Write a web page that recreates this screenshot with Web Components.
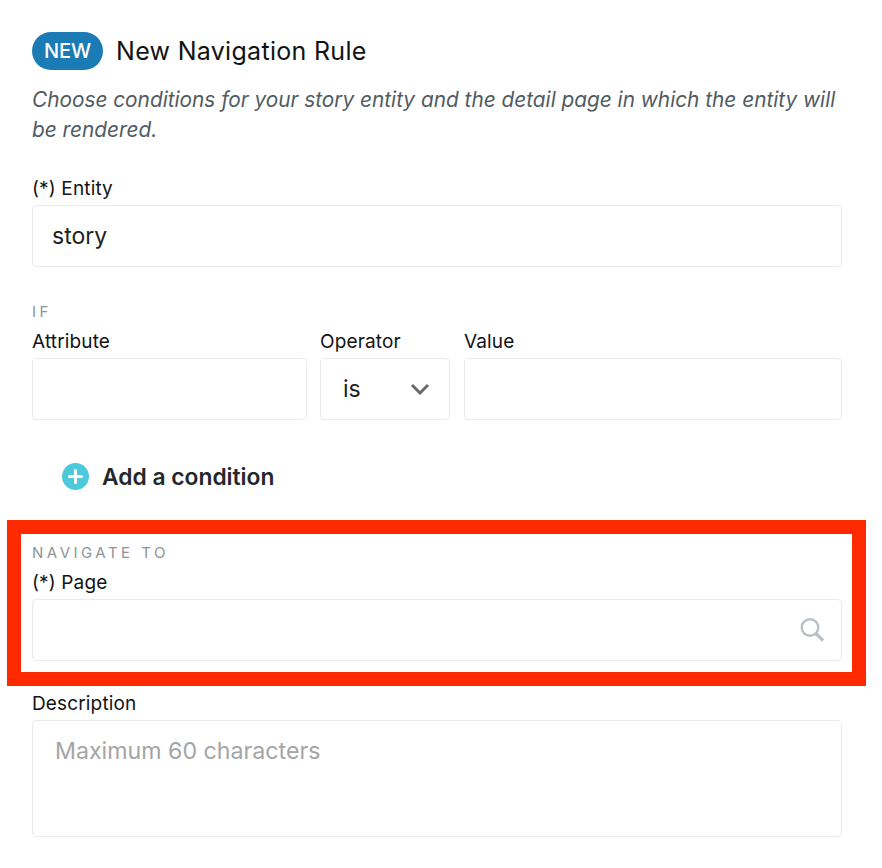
<!DOCTYPE html>
<html>
<head>
<meta charset="utf-8">
<title>New Navigation Rule</title>
<style>
    html, body { margin: 0; background: #ffffff; }
    body { font-family: Inter, "Liberation Sans", sans-serif; color: #16181b; }
</style>
</head>
<body>
<rule-form></rule-form>

<script>
class RuleBadge extends HTMLElement {
    constructor() {
        super();
        this.attachShadow({mode: 'open'}).innerHTML = `
            <style>
                :host {
                    display: inline-flex;
                    align-items: center;
                    justify-content: center;
                    width: 71px;
                    height: 38px;
                    border-radius: 19px;
                    background: #1b7cb5;
                    color: #ffffff;
                    font-size: 20px;
                    font-weight: 500;
                }
            </style>
            <slot></slot>
        `;
    }
}

class SectionLabel extends HTMLElement {
    constructor() {
        super();
        this.attachShadow({mode: 'open'}).innerHTML = `
            <style>
                :host {
                    display: block;
                    height: 20px;
                    line-height: 20px;
                    font-size: 15px;
                    letter-spacing: 3.5px;
                    color: #8b949c;
                }
            </style>
            <slot></slot>
        `;
    }
}

class FormField extends HTMLElement {
    constructor() {
        super();
        this.attachShadow({mode: 'open'}).innerHTML = `
            <style>
                :host {
                    display: block;
                    min-width: 0;
                }
                label {
                    display: block;
                    height: 23px;
                    line-height: 23px;
                    margin-bottom: 5px;
                    font-size: 19px;
                    letter-spacing: .15px;
                    color: #111315;
                }
                #box {
                    display: flex;
                    align-items: center;
                    justify-content: space-between;
                    box-sizing: border-box;
                    height: var(--box-height, 62px);
                    padding: 0 var(--box-pad-right, 19px) 0 var(--box-pad-left, 19px);
                    background: #ffffff;
                    border: 1px solid #ebebeb;
                    border-radius: 4px;
                    font-size: 23px;
                    color: #1d1f22;
                }
                ::slotted([slot="icon"]) {
                    flex: none;
                }
            </style>
            <label></label>
            <div id="box">
                <slot></slot>
                <slot name="icon"></slot>
            </div>
        `;
    }

    connectedCallback() {
        this.shadowRoot.querySelector('label').textContent = this.getAttribute('label');
    }
}

class AddCondition extends HTMLElement {
    constructor() {
        super();
        this.attachShadow({mode: 'open'}).innerHTML = `
            <style>
                :host {
                    display: flex;
                    align-items: center;
                    gap: 13px;
                    font-size: 22.8px;
                    font-weight: 600;
                    color: #24272b;
                }
                svg { display: block; }
            </style>
            <svg width="27" height="27" viewBox="0 0 27 27">
                <circle cx="13.5" cy="13.5" r="13.5" fill="#4dc9dc"/>
                <path d="M13.5 7.5v12M7.5 13.5h12" stroke="#fff" stroke-width="3" stroke-linecap="round"/>
            </svg>
            <slot></slot>
        `;
    }
}

class HighlightBox extends HTMLElement {
    constructor() {
        super();
        this.attachShadow({mode: 'open'}).innerHTML = `
            <style>
                :host {
                    display: block;
                    box-sizing: border-box;
                    margin: 0 -24px 0 -25px;
                    padding: 9px 10px 11px 11px;
                    border: 14px solid #ff2a00;
                }
            </style>
            <slot></slot>
        `;
    }
}

class RuleForm extends HTMLElement {
    constructor() {
        super();
        this.attachShadow({mode: 'open'}).innerHTML = `
            <style>
                :host {
                    display: block;
                    box-sizing: border-box;
                    width: 882px;
                    height: 868px;
                    overflow: hidden;
                    padding: 32px 40px 0 32px;
                }
                header {
                    display: flex;
                    align-items: center;
                    gap: 13px;
                    height: 38px;
                }
                h1 {
                    margin: 0;
                    font-size: 25px;
                    font-weight: 400;
                    letter-spacing: .3px;
                    color: #111315;
                }
                p {
                    margin: 15px 0 0;
                    font-size: 20.8px;
                    line-height: 30px;
                    font-style: italic;
                    color: #515b63;
                }
                #entity { margin-top: 32px; }
                #if { margin: 35px 0 8px; }
                #row {
                    display: grid;
                    grid-template-columns: 275px 130px 1fr;
                    column-gap: 13px;
                }
                #value { margin-left: 1px; }
                add-condition { margin: 43px 0 0 30px; }
                highlight-box { margin-top: 30px; }
                highlight-box section-label { margin-bottom: 8px; }
                #operator { --box-pad-left: 22px; }
                #page { --box-pad-right: 17px; }
                #description { margin-top: 6px; --box-height: 117px; }
                #placeholder { align-self: flex-start; margin: 16px 0 0 3px; font-size: 23.2px; color: #a5a5a5; }
            </style>
            <header>
                <rule-badge>NEW</rule-badge>
                <h1>New Navigation Rule</h1>
            </header>
            <p>Choose conditions for your story entity and the detail page in which the entity will be rendered.</p>

            <form-field id="entity" label="(*) Entity">story</form-field>

            <section-label id="if">IF</section-label>
            <div id="row">
                <form-field label="Attribute"></form-field>
                <form-field id="operator" label="Operator">
                    is
                    <svg slot="icon" width="20" height="12" viewBox="0 0 20 12">
                        <path d="M2 2l8 8 8-8" fill="none" stroke="#6b6b6b" stroke-width="3"/>
                    </svg>
                </form-field>
                <form-field id="value" label="Value"></form-field>
            </div>

            <add-condition>Add a condition</add-condition>

            <highlight-box>
                <section-label>NAVIGATE TO</section-label>
                <form-field id="page" label="(*) Page">
                    <span></span>
                    <svg slot="icon" width="24" height="24" viewBox="0 0 24 24">
                        <circle cx="10" cy="9.5" r="8.3" fill="none" stroke="#b9c0c6" stroke-width="2.4"/>
                        <path d="M16 15.5l7 7" stroke="#b9c0c6" stroke-width="3.2"/>
                    </svg>
                </form-field>
            </highlight-box>

            <form-field id="description" label="Description">
                <span id="placeholder">Maximum 60 characters</span>
            </form-field>
        `;
    }
}

customElements.define('rule-badge', RuleBadge);
customElements.define('section-label', SectionLabel);
customElements.define('form-field', FormField);
customElements.define('add-condition', AddCondition);
customElements.define('highlight-box', HighlightBox);
customElements.define('rule-form', RuleForm);
</script>
</body>
</html>
